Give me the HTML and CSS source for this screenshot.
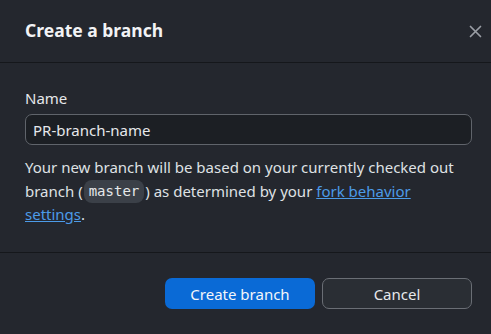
FILE: index.html
```html
<html lang="en">
<head>
    <meta charset="UTF-8">
    <title>Create a branch</title>
    <link rel="stylesheet" href="styles.css">
</head>
<body>
    <div class="dialog">
        <div class="dialog-header">
            <h1>Create a branch</h1>
            <button class="close-btn" aria-label="Close">
                <svg width="13" height="13" viewBox="0 0 13 13">
                    <path d="M1.5 1.5 L11.5 11.5 M11.5 1.5 L1.5 11.5" stroke="currentColor" stroke-width="1.7" stroke-linecap="round"/>
                </svg>
            </button>
        </div>

        <div class="dialog-body">
            <label for="branch-name">Name</label>
            <input type="text" id="branch-name" value="PR-branch-name">
            <p class="hint">
                Your new branch will be based on your currently checked out
                branch (<code>master</code>) as determined by your <a href="#">fork behavior settings</a>.
            </p>
        </div>

        <div class="dialog-footer">
            <button class="btn btn-primary">Create branch</button>
            <button class="btn btn-secondary">Cancel</button>
        </div>
    </div>
</body>
</html>
```

FILE: styles.css
```css
* {
    margin: 0;
    padding: 0;
    box-sizing: border-box;
    font-family: 'Noto Sans', sans-serif;
}

body {
    background: #24272e;
    color: #e6e8eb;
    width: 491px;
    height: 334px;
    overflow: hidden;
}

.dialog {
    display: flex;
    flex-direction: column;
    height: 334px;
}

/* Header */
.dialog-header {
    display: flex;
    align-items: center;
    justify-content: space-between;
    height: 63px;
    padding: 0 4px 0 25px;
    border-bottom: 1px solid #15171b;
}

.dialog-header h1 {
    font-size: 17.5px;
    font-weight: 700;
    color: #f2f3f5;
    margin-top: -2px;
}

.close-btn {
    background: none;
    border: none;
    color: #9a9ea5;
    width: 24px;
    height: 24px;
    display: flex;
    align-items: center;
    justify-content: center;
    cursor: pointer;
}

/* Body */
.dialog-body {
    flex: 1;
    padding: 25px 19px 0 25px;
}

label {
    display: block;
    font-size: 15px;
    line-height: 20px;
    color: #e6e8eb;
    margin-bottom: 6px;
}

input {
    width: 100%;
    height: 31px;
    padding: 0 7px;
    border: 1px solid #60646b;
    border-radius: 7px;
    background: #1c1f24;
    color: #e6e8eb;
    font-size: 15px;
    outline: none;
}

.hint {
    margin-top: 11px;
    font-size: 15px;
    line-height: 23.5px;
    color: #dfe1e4;
}

code {
    display: inline-block;
    font-family: 'DejaVu Sans Mono', monospace;
    font-size: 14px;
    line-height: 23px;
    vertical-align: top;
    background: #3b4048;
    color: #e6e8eb;
    padding: 0 5px;
    margin: 0 1px;
    border-radius: 8px;
}

.hint a {
    color: #4c9be8;
}

/* Footer */
.dialog-footer {
    display: flex;
    justify-content: flex-end;
    gap: 7px;
    height: 82px;
    padding: 25px 19px 0 0;
    border-top: 1px solid #15171b;
}

.btn {
    width: 150px;
    height: 31px;
    border-radius: 7px;
    font-size: 15px;
    cursor: pointer;
}

.btn-primary {
    background: #0a6ad6;
    border: none;
    color: #f3f6fa;
}

.btn-secondary {
    background: #2a2e34;
    border: 1px solid #6a6e75;
    color: #e6e8eb;
}
```
